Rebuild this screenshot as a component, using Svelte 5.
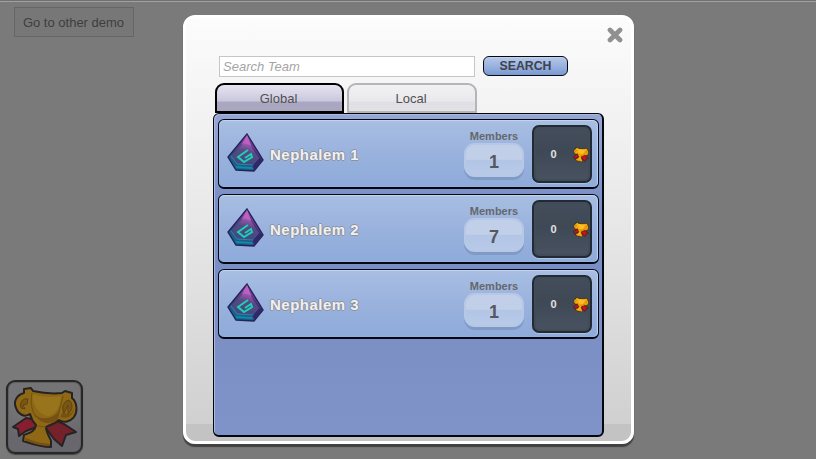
<script>
  const teams = [
    { name: 'Nephalem 1', members: 1, score: 0 },
    { name: 'Nephalem 2', members: 7, score: 0 },
    { name: 'Nephalem 3', members: 1, score: 0 }
  ];
  let tab = $state('Global');
</script>

{#snippet trophy()}
  <svg class="trophy" viewBox="6 6 66 62" aria-hidden="true">
    <path class="ribbon" d="M20 38 L7 47 12 49 13 56 20 51 31 47 33 40Z" />
    <path class="ribbon dark" d="M51 41 L58 44 70 52 60 55 56 66 48 59 39 47Z" />
    <path class="gold" d="M18 9 L25 8 27 11 C36 13 47 14 56 13 L59 11 66 13 66 18 C71 22 72 31 68 37 C64 42 58 43 53 40 C49 44 43 45 40 47 C40 53 44 57 45 61 L45 67 C35 67 26 64 17 61 L18 55 C23 53 29 52 30 45 C27 42 25 38 24 34 C18 38 12 34 10 28 C7 21 11 15 18 13Z" />
    <path class="shine" d="M26 14 C36 17 47 18 55 16 C54 27 50 34 43 36 C34 36 27 26 26 14Z" />
    <path class="shadow" d="M28 34 C36 41 47 39 54 30 L52 39 C45 45 35 45 28 34Z" />
    <path class="shadow" d="M20 58 C29 62 36 63 44 64 L44 66 C34 66 26 63 19 60Z" />
    <path class="shadow" d="M54 37 C63 40 68 34 68 27 C66 36 61 35 57 32Z" />
    <path class="hole" d="M15 28 C13 22 17 18 22 19 L21 24 17 25 19 29Z M58 33 C55 27 58 21 63 20 C68 24 66 31 62 34 L62 25Z" />
    <path class="shade" d="M26 13 C24 23 25 30 30 37 M57 16 C55 24 54 31 50 37 M31 46 L40 47" />
  </svg>
{/snippet}

<div class="page">
  <aside>
    <button class="demo">Go to other demo</button>
    <button class="cup-button" aria-label="Leaderboard">{@render trophy()}</button>
  </aside>

  <main>
    <button class="close" aria-label="Close">
      <svg width="16" height="16" viewBox="0 0 16 16"><path d="M3 3 L13 13 M13 3 L3 13" /></svg>
    </button>
    <form onsubmit={(e) => e.preventDefault()}>
      <input placeholder="Search Team" aria-label="Search Team" />
      <button class="search">SEARCH</button>
    </form>
    <nav>
      {#each ['Global', 'Local'] as label}
        <button class="tab" class:active={tab === label} onclick={() => (tab = label)}>{label}</button>
      {/each}
    </nav>
    <section>
      {#each teams as team}
        <article>
          <svg class="gem" width="37" height="40" viewBox="0 0 37 40" aria-hidden="true">
            <defs>
              <linearGradient id="gem" x1=".7" y1="0" x2=".25" y2="1">
                <stop offset="0" stop-color="#a347b0" />
                <stop offset=".3" stop-color="#694096" />
                <stop offset=".6" stop-color="#34447a" />
                <stop offset="1" stop-color="#087095" />
              </linearGradient>
              <linearGradient id="face" x1=".7" y1="0" x2=".4" y2="1">
                <stop offset="0" stop-color="#b05abb" />
                <stop offset=".4" stop-color="#554a83" />
                <stop offset="1" stop-color="#3d4a7c" />
              </linearGradient>
            </defs>
            <path d="M20 1 L36 27 27 38 9 37 1 24Z" fill="url(#gem)" stroke="#242355" stroke-width="1.4" />
            <path d="M20 2 L24 12 35 27 30 25Z" fill="#4d2674" />
            <path d="M20 2 L15 11 22 15 24 12Z" fill="#bd60bf" />
            <path d="M17 10 L23 12 32 25 26 32 10 31 4 23Z" fill="url(#face)" />
            <path d="M4 23 L10 31 26 32 32 25" fill="none" stroke="#3188b5" stroke-width=".9" />
            <path d="M26 32 L27 38 36 27 32 25Z" fill="#30286a" />
            <path d="M8 33 L25 34 26 36 10 35Z" fill="#128aa5" />
            <path d="M21 17 L11 24 17 29 25 24 24 21 18 25" fill="none" stroke="#1fcfb4" stroke-width="2" />
          </svg>
          <h2>{team.name}</h2>
          <div class="members">
            <span>Members</span>
            <strong>{team.members}</strong>
          </div>
          <div class="score"><span>{team.score}</span>{@render trophy()}</div>
        </article>
      {/each}
    </section>
  </main>
</div>

<style>
  :global(body) { margin: 0; overflow: hidden; }
  * { box-sizing: border-box; }
  button, input { font-family: inherit; margin: 0; padding: 0; }
  .page {
    display: grid;
    grid-template-columns: 183px 451px 1fr;
    width: 816px;
    height: 459px;
    background: linear-gradient(#707070 0 1px, #a0a0a0 1px 2px, #7a7a7a 2px);
    font-family: "Liberation Sans", Arial, sans-serif;
    color: #505050;
  }
  aside {
    display: flex;
    flex-direction: column;
    align-items: flex-start;
    justify-content: space-between;
    padding: 7px 0 5px 6px;
  }
  .demo {
    width: 120px;
    height: 30px;
    margin-left: 8px;
    padding-right: 1px;
    border: 1px solid #666;
    background: #777;
    color: #3e3e3e;
    font-size: 13px;
  }
  .cup-button {
    width: 77px;
    height: 74px;
    border: 2px solid #262728;
    border-radius: 9px;
    background: radial-gradient(ellipse 90% 75% at 50% 10%, #747477 0 60%, #67676d 100%);
    box-shadow: inset 0 0 0 1px #606063, 0 1px 1px #444;
    display: grid;
    place-items: center;
  }
  .trophy { display: block; overflow: visible; }
  .trophy path { stroke: none; stroke-linejoin: round; }
  .trophy .ribbon { fill: #861e2f; stroke: #262321; stroke-width: 2; }
  .trophy .dark { fill: #75212b; }
  .trophy .gold { fill: #8e6815; stroke: #262321; stroke-width: 2; }
  .trophy .shine { fill: #98741c; }
  .trophy .shadow { fill: #775013; }
  .trophy .hole { fill: #795614; stroke: #5e4213; stroke-width: 1; }
  .trophy .shade { fill: none; stroke: #745313; stroke-width: 1.2; }
  .cup-button .trophy { width: 66px; height: 62px; }
  main {
    height: 429px;
    margin-top: 15px;
    padding: 9px 27px 5px;
    display: flex;
    flex-direction: column;
    border: 3px solid #fff;
    border-radius: 12px;
    background: linear-gradient(#fcfcfc, #eee 33%, #e2e2e2 60%, #d0d0d0 96%, #c3c3c3 96%);
    box-shadow: 0 3px 1px #414141;
  }
  .close {
    width: 16px;
    height: 16px;
    margin: 0 -19px 0 auto;
    border: 0;
    background: none;
    flex: none;
    align-self: flex-end;
  }
  .close svg { display: block; }
  .close path { stroke: #909090; stroke-width: 4.7; stroke-linecap: round; }
  form { display: flex; gap: 8px; margin: 12px 0 0 6px; height: 21px; flex: none; }
  input {
    width: 256px;
    height: 21px;
    margin-top: 1px;
    padding: 0 0 0 3px;
    border: 1px solid #c6c6c6;
    border-radius: 0;
    background: #fff;
    font-size: 13px;
    outline: none;
  }
  input::placeholder { color: #a5a5a5; font-style: italic; opacity: 1; }
  .search {
    width: 85px;
    height: 20px;
    margin-top: 1px;
    border: 1px solid #080a0e;
    border-radius: 6px;
    background: linear-gradient(#b6c9ea, #91abdc 65%, #7899d0);
    box-shadow: inset 0 1px #c2d2ed;
    color: #3d424c;
    font-size: 12.3px;
    font-weight: bold;
  }
  nav { display: flex; gap: 3px; margin: 7px 0 0 2px; height: 30px; flex: none; }
  .tab {
    width: 130px;
    height: 30px;
    border: 2px solid #b5b5b9;
    border-radius: 9px 9px 0 0;
    background: linear-gradient(#f1f1f3, #e9e9ed 62%, #dfdfe5 66%, #e2e2e7);
    color: #505050;
    font-size: 13px;
    padding: 1px 2px 0 0;
  }
  .tab.active {
    width: 129px;
    border-color: #000;
    background: linear-gradient(#e6e4f1, #cbc8dd 60%, #aaa8c1 67%, #a8a6c0);
  }
  section {
    width: 391px;
    height: 324px;
    padding: 4px;
    border: 2px solid #05070e;
    border-width: 1px 2px 2px 1px;
    border-radius: 6px;
    background: linear-gradient(#96a7d5, #788dc5 30%, #7c90c6 75%, #8093c9);
    box-shadow: inset 1px 1px #a9b9e0;
    display: flex;
    flex-direction: column;
    gap: 5px;
    flex: none;
  }
  article {
    width: 381px;
    height: 70px;
    margin-top: 1px;
    margin-bottom: -1px;
    padding: 0 6px 0 8px;
    border: 1px solid #030711;
    border-bottom-width: 2px;
    border-radius: 6px;
    background: linear-gradient(#a8bee2, #98b1dd 55%, #8fabda);
    box-shadow: inset 0 1px 1px #c3d6f1, inset -1px 0 1px #bdd0ee;
    display: flex;
    align-items: flex-start;
    flex: none;
  }
  .gem { margin-top: 13px; flex: none; }
  h2 {
    width: 194px;
    margin: 26px 0 0 6px;
    color: #f0f0f0;
    font-size: 15px;
    line-height: 18px;
    font-weight: bold;
    letter-spacing: .5px;
    text-shadow: -1px 0 #8d929e, 1px 0 #8d929e, 0 -1px #8d929e, 0 1px #8d929e;
  }
  .members { width: 60px; display: flex; flex-direction: column; align-items: center; }
  .members span {
    margin-top: 10px;
    color: #65676d;
    font-size: 11px;
    font-weight: bold;
    line-height: 13px;
  }
  .members strong {
    width: 60px;
    height: 34px;
    display: grid;
    place-items: center;
    border-radius: 11px;
    border: 2px solid #b6c8e5;
    background: linear-gradient(#c1cfe8 48%, #b2c5e5 50%, #b8cae8);
    box-shadow: 0 3px #7f9bc5;
    font-size: 18px;
    line-height: 22px;
    color: #55585e;
    padding-top: 4px;
  }
  .score {
    width: 60px;
    height: 58px;
    margin: 5px 0 0 8px;
    display: grid;
    grid-template-columns: 39px 16px;
    align-items: center;
    border: 2px solid #222a34;
    border-radius: 7px;
    background: linear-gradient(#434d5b, #3f4956 45%, #485260);
    box-shadow: inset 0 0 0 2px #414c59, 0 1px 1px #b0c4e5;
    color: #e2e2e2;
    font-size: 11px;
    font-weight: bold;
  }
  .score span { text-align: center; }
  .score .trophy { width: 16px; height: 15px; }
  .score .trophy .gold { fill: #f9ac10; stroke: #251a0b; stroke-width: 2.5; }
  .score .trophy .shine { fill: #ffbf22; }
  .score .trophy .shadow { fill: #e98b08; }
  .score .trophy .hole { fill: #d98a08; stroke: none; }
  .score .trophy .shade { stroke: #e8960a; }
  .score .trophy .ribbon { fill: #cf101d; stroke: #3a120e; stroke-width: 2; }
</style>
